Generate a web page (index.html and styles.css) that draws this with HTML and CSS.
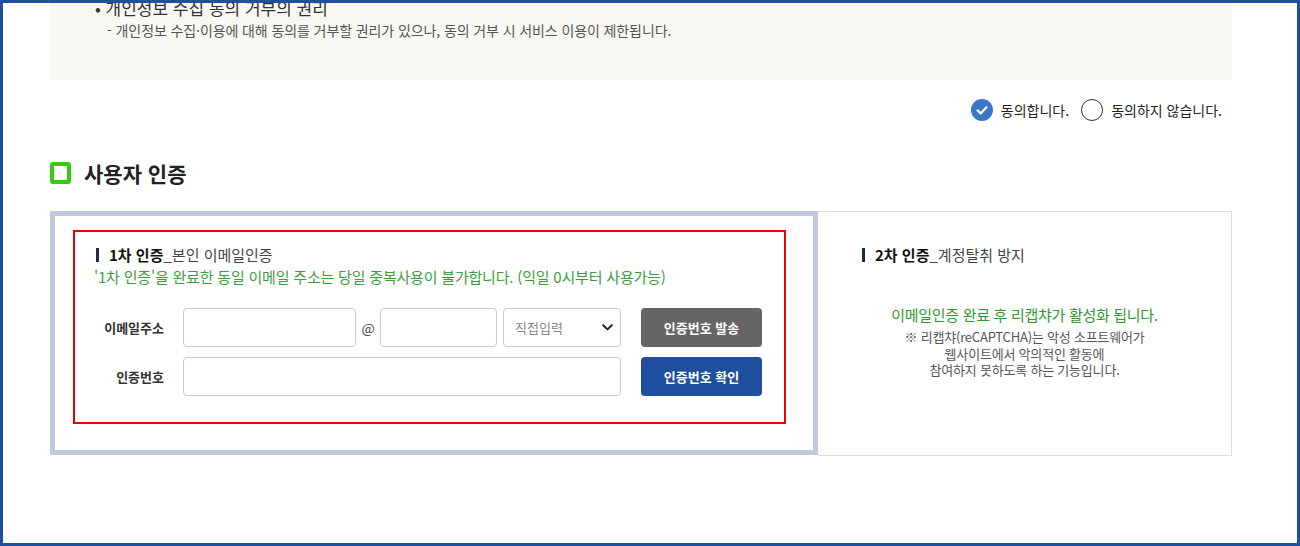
FILE: index.html
```html
<!DOCTYPE html>
<html lang="ko">
<head>
    <meta charset="UTF-8">
    <meta name="viewport" content="width=device-width, initial-scale=1.0">
    <title>사용자 인증</title>
    <link rel="stylesheet" href="styles.css">
</head>
<body>
    <div class="frame">
        <div class="page">
            <div class="notice">
                <p class="notice-title">• 개인정보 수집 동의 거부의 권리</p>
                <p class="notice-desc">- 개인정보 수집·이용에 대해 동의를 거부할 권리가 있으나, 동의 거부 시 서비스 이용이 제한됩니다.</p>
            </div>

            <div class="agree-row">
                <label class="radio">
                    <span class="radio-mark checked">
                        <svg width="22" height="22" viewBox="0 0 22 22">
                            <circle cx="11" cy="11" r="11" fill="#3b77c8"/>
                            <path d="M6.6 11.4 L9.7 14.4 L15.4 8.3" fill="none" stroke="#fff" stroke-width="2.2" stroke-linecap="round" stroke-linejoin="round"/>
                        </svg>
                    </span>
                    동의합니다.
                </label>
                <label class="radio">
                    <span class="radio-mark"></span>
                    동의하지 않습니다.
                </label>
            </div>

            <h2 class="section-title"><span class="title-icon"></span>사용자 인증</h2>

            <div class="auth">
                <div class="auth-step1">
                    <div class="step-box">
                        <h3 class="step-title"><b>1차 인증</b>_본인 이메일인증</h3>
                        <p class="step-note">'1차 인증'을 완료한 동일 이메일 주소는 당일 중복사용이 불가합니다. (익일 0시부터 사용가능)</p>

                        <div class="form-row first">
                            <span class="form-label">이메일주소</span>
                            <input class="field email-id" type="text">
                            <span class="at">@</span>
                            <input class="field email-domain" type="text">
                            <div class="select-wrap">
                                <select class="field select">
                                    <option>직접입력</option>
                                </select>
                                <svg class="chevron" width="11" height="7" viewBox="0 0 11 7">
                                    <path d="M1.2 1.2 L5.5 5.4 L9.8 1.2" fill="none" stroke="#222" stroke-width="2" stroke-linecap="round" stroke-linejoin="round"/>
                                </svg>
                            </div>
                            <button class="btn btn-gray" type="button">인증번호 발송</button>
                        </div>

                        <div class="form-row">
                            <span class="form-label">인증번호</span>
                            <input class="field code" type="text">
                            <button class="btn btn-blue" type="button">인증번호 확인</button>
                        </div>
                    </div>
                </div>

                <div class="auth-step2">
                    <h3 class="step-title"><b>2차 인증</b>_계정탈취 방지</h3>
                    <p class="captcha-msg">이메일인증 완료 후 리캡챠가 활성화 됩니다.</p>
                    <p class="captcha-desc">※ 리캡챠(reCAPTCHA)는 악성 소프트웨어가<br>웹사이트에서 악의적인 활동에<br>참여하지 못하도록 하는 기능입니다.</p>
                </div>
            </div>
        </div>
    </div>
</body>
</html>
```

FILE: styles.css
```css
body, html {
    margin: 0;
    padding: 0;
    height: 100%;
    background-color: #fff;
    font-family: "Noto Sans CJK KR", "Noto Sans", sans-serif;
    color: #333;
}

p, h2, h3 {
    margin: 0;
}

.frame {
    box-sizing: border-box;
    height: 546px;
    border: 3px solid #1f4f9f;
    overflow: hidden;
}

.page {
    padding-left: 47px;
    width: 1182px;
}

/* notice box (top part is cut off) */
.notice {
    margin-top: -13px;
    padding: 8px 0 40px 45px;
    background-color: #f9f7f1;
}

.notice-title {
    font-size: 17px;
    line-height: 20px;
    color: #333;
}

.notice-desc {
    margin-top: 2px;
    padding-left: 12px;
    font-size: 14px;
    line-height: 20px;
    color: #555;
    letter-spacing: -0.1px;
}

/* agree radios */
.agree-row {
    display: flex;
    justify-content: flex-end;
    align-items: center;
    gap: 12px;
    margin-top: 19px;
    padding-right: 10px;
    height: 22px;
}

.radio {
    display: flex;
    align-items: center;
    gap: 8px;
    font-size: 14px;
    color: #222;
}

.radio-mark {
    box-sizing: border-box;
    display: block;
    width: 22px;
    height: 22px;
    border: 1.5px solid #333;
    border-radius: 50%;
    background: #fff;
}

.radio-mark.checked {
    border: none;
}

.radio-mark svg {
    display: block;
}

/* section heading */
.section-title {
    display: flex;
    align-items: center;
    gap: 13px;
    margin-top: 41px;
    height: 22px;
    font-size: 21px;
    font-weight: bold;
    color: #222;
}

.title-icon {
    box-sizing: border-box;
    width: 21px;
    height: 22px;
    border: 4px solid #33cc11;
    border-radius: 3px;
}

/* auth panels */
.auth {
    display: flex;
    align-items: flex-start;
    margin-top: 27px;
}

.auth-step1 {
    box-sizing: border-box;
    width: 768px;
    height: 244px;
    border: 5px solid #bfc9dc;
    padding: 14px 0 0 18px;
}

.step-box {
    box-sizing: border-box;
    width: 713px;
    height: 194px;
    border: 2px solid #e60000;
    padding: 13px 0 0 21px;
}

.step-title {
    display: flex;
    align-items: center;
    font-size: 15px;
    line-height: 20px;
    font-weight: normal;
    color: #444;
}

.step-title::before {
    content: "";
    width: 3px;
    height: 14px;
    margin-right: 10px;
    background-color: #1c2b4f;
}

.step-title b {
    color: #111;
}

.step-note {
    margin: 2px 0 0 -2px;
    font-size: 15px;
    line-height: 20px;
    color: #3d9e3d;
    letter-spacing: -0.2px;
}

.form-row {
    display: flex;
    align-items: center;
    height: 39px;
    margin-top: 10px;
}

.form-row.first {
    margin-top: 21px;
}

.form-label {
    width: 68px;
    margin-right: 19px;
    text-align: right;
    font-size: 13px;
    font-weight: bold;
    color: #333;
}

.field {
    box-sizing: border-box;
    height: 39px;
    border: 1px solid #ccc;
    border-radius: 4px;
    background: #fff;
    font-family: inherit;
    font-size: 13px;
    padding: 0 11px;
}

.email-id {
    width: 173px;
}

.at {
    width: 24px;
    text-align: center;
    font-size: 14px;
    color: #444;
}

.email-domain {
    width: 117px;
}

.select-wrap {
    position: relative;
    margin-left: 6px;
}

.select {
    display: block;
    width: 118px;
    appearance: none;
    color: #888;
}

.chevron {
    position: absolute;
    right: 8px;
    top: 16px;
    pointer-events: none;
}

.code {
    width: 438px;
}

.btn {
    box-sizing: border-box;
    width: 121px;
    height: 39px;
    margin-left: 20px;
    border: none;
    border-radius: 4px;
    color: #fff;
    font-family: inherit;
    font-size: 13px;
    font-weight: bold;
}

.btn-gray {
    background-color: #666;
}

.btn-blue {
    background-color: #1f4e9f;
}

.auth-step2 {
    box-sizing: border-box;
    flex: 1;
    height: 245px;
    border: 1px solid #ddd;
    border-left: none;
    padding-top: 33px;
}

.auth-step2 .step-title {
    padding-left: 44px;
}

.captcha-msg {
    margin-top: 40px;
    text-align: center;
    font-size: 15px;
    line-height: 20px;
    color: #2e9a2e;
    letter-spacing: -0.3px;
}

.captcha-desc {
    margin-top: 4px;
    text-align: center;
    font-size: 13px;
    line-height: 16.5px;
    color: #555;
    letter-spacing: -0.2px;
}
```
